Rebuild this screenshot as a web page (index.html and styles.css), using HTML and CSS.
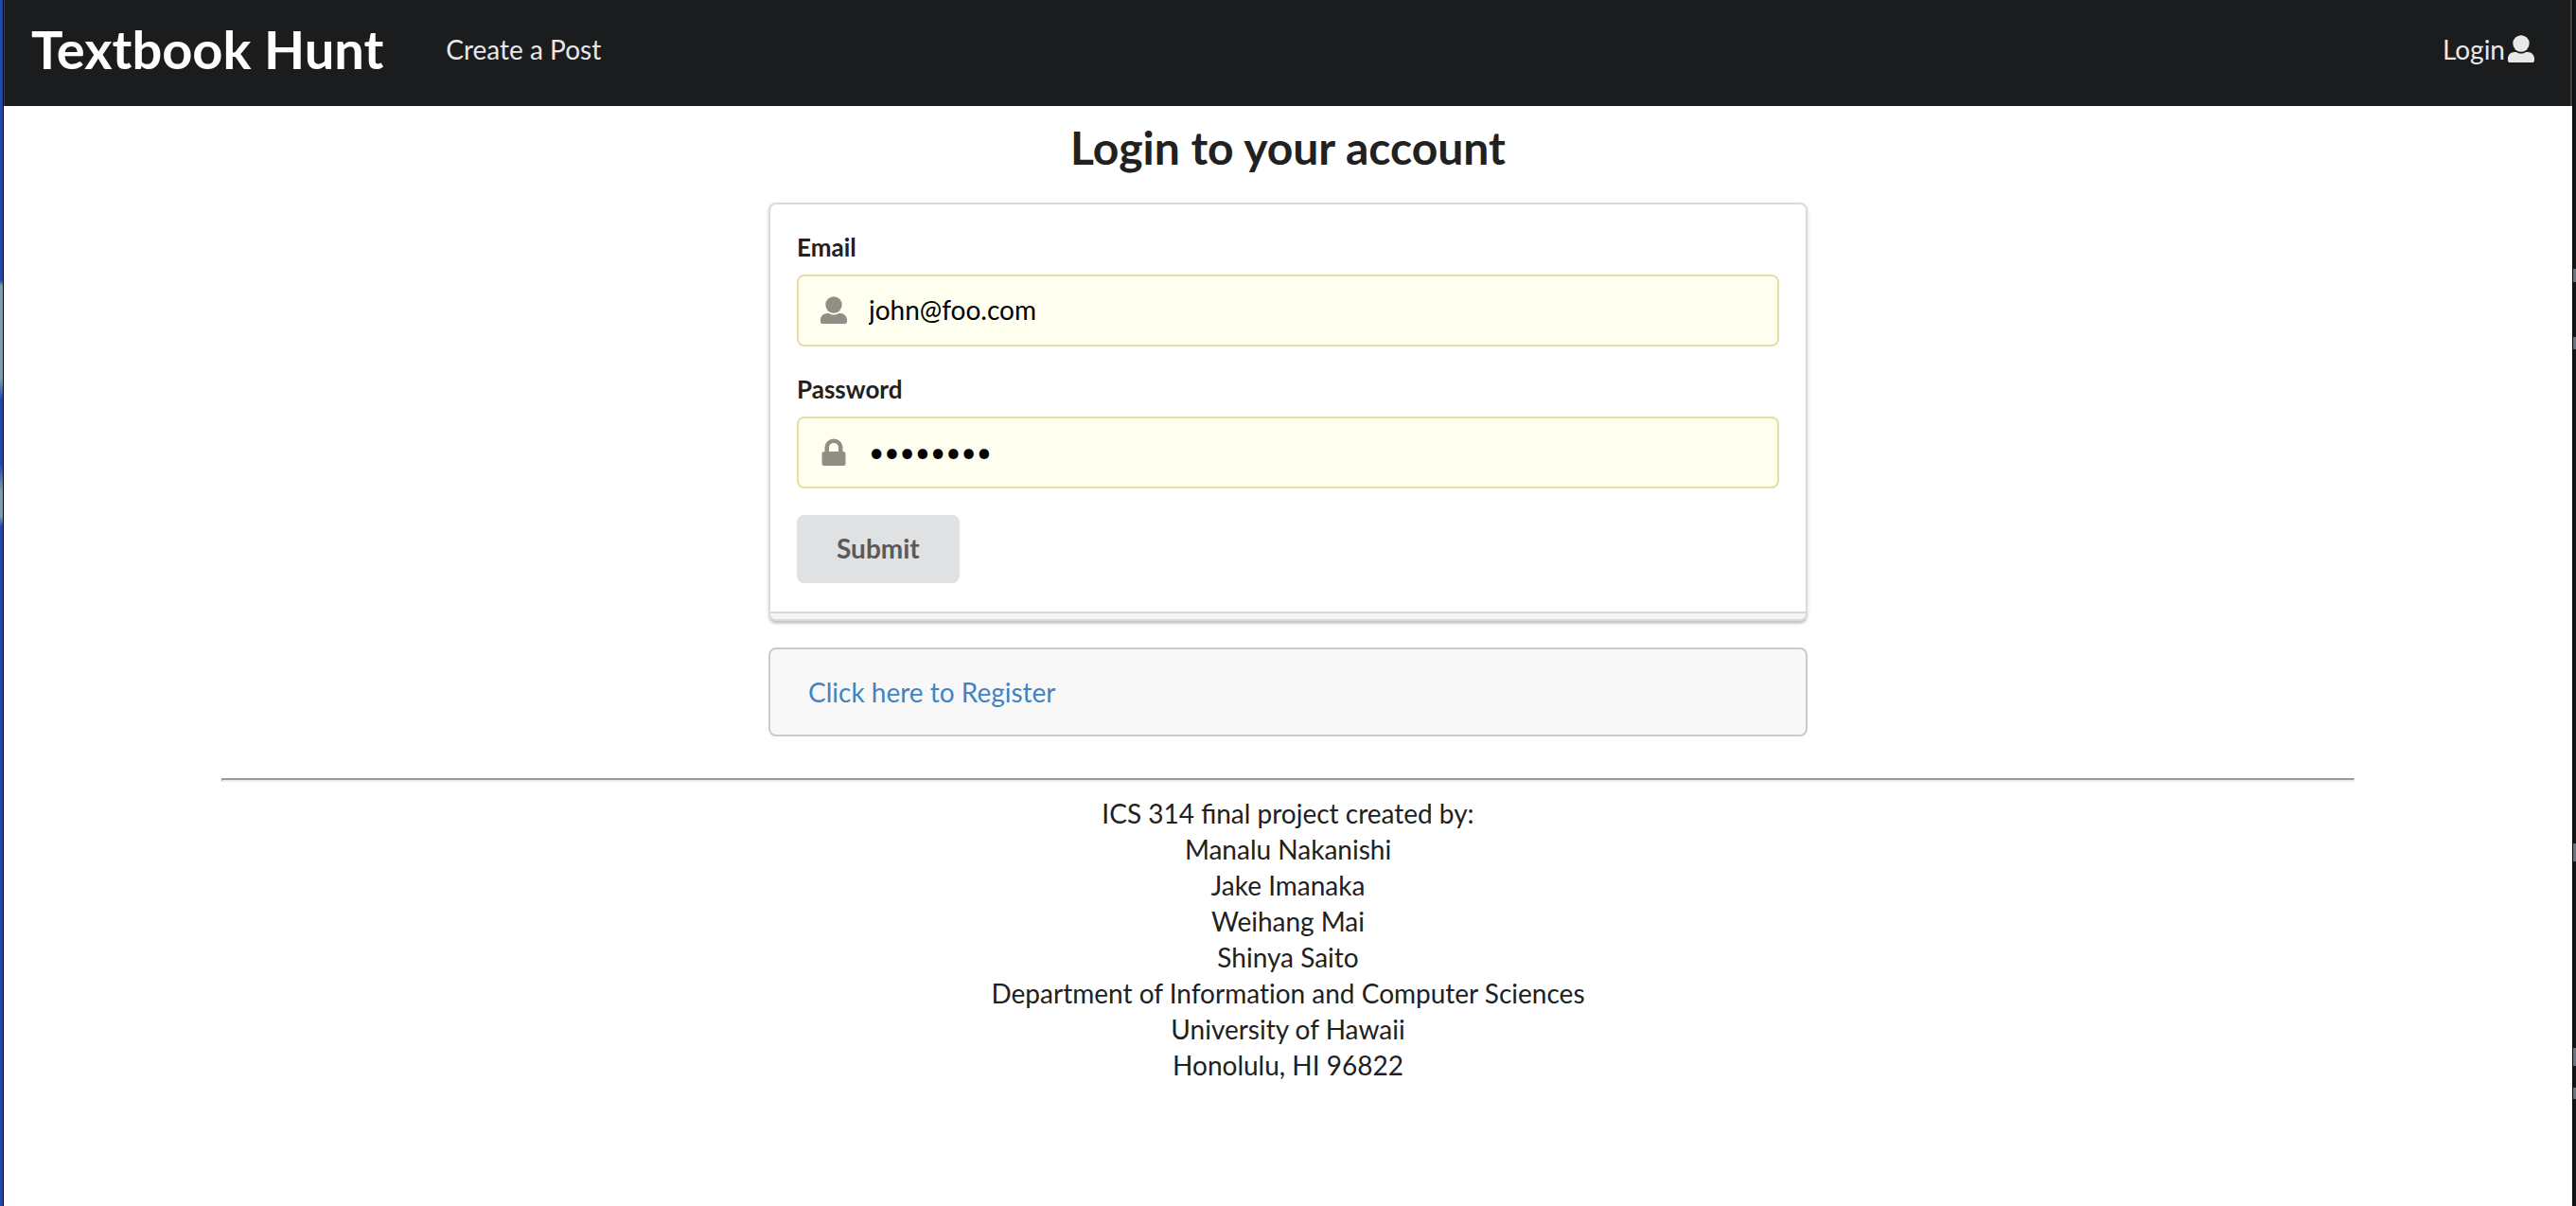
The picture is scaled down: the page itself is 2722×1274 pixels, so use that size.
FILE: index.html
```html
<!DOCTYPE html>
<html lang="en">
<head>
<meta charset="utf-8">
<title>Textbook Hunt</title>
<link rel="stylesheet" href="styles.css">
</head>
<body>
<div class="edge edge-left"></div>
<div class="window">
  <nav class="menu">
    <a class="brand" href="#">Textbook Hunt</a>
    <a class="item" href="#">Create a Post</a>
    <a class="item login" href="#">Login<svg class="icon" viewBox="0 0 28 30" aria-hidden="true"><circle cx="14" cy="9" r="8.700"/><path d="M7 18h2c3 2 7 2 10 0h2c4 0 7 3 7 7v1.500c0 2-1 2.500-2.500 2.500h-23C1 29 0 28.500 0 26.500V25c0-4 3-7 7-7z"/></svg></a>
  </nav>
  <main class="login-page">
    <h2 class="title">Login to your account</h2>
    <form class="card">
      <div class="field">
        <label for="email">Email</label>
        <div class="input">
          <svg class="icon" viewBox="0 0 28 30" aria-hidden="true"><circle cx="14" cy="9" r="8.700"/><path d="M7 18h2c3 2 7 2 10 0h2c4 0 7 3 7 7v1.500c0 2-1 2.500-2.500 2.500h-23C1 29 0 28.500 0 26.500V25c0-4 3-7 7-7z"/></svg>
          <input id="email" type="text" value="john@foo.com">
        </div>
      </div>
      <div class="field">
        <label for="password">Password</label>
        <div class="input">
          <svg class="icon" viewBox="0 0 28 30" aria-hidden="true"><path fill-rule="evenodd" d="M4.500 14v-4.500a9.500 9 0 0 1 19 0V14h.5q2.500 0 2.500 2.500v10q0 2.500-2.500 2.500H4q-2.500 0-2.500-2.500v-10Q1.500 14 4 14zM9 14h10V9.500a5 4.500 0 0 0-10 0z"/></svg>
          <input id="password" type="password" value="changeme">
        </div>
      </div>
      <button class="submit" type="button">Submit</button>
    </form>
    <div class="message"><a href="#">Click here to Register</a></div>
  </main>
  <footer class="footer">
    <hr>
    <div>ICS 314 final project created by:</div>
    <div>Manalu Nakanishi</div>
    <div>Jake Imanaka</div>
    <div>Weihang Mai</div>
    <div>Shinya Saito</div>
    <div class="department">Department of Information and Computer Sciences</div>
    <div>University of Hawaii</div>
    <div>Honolulu, HI 96822</div>
  </footer>
</div>
<div class="edge edge-right"></div>
</body>
</html>
```

FILE: styles.css
```css
* { box-sizing: border-box; }

body {
  margin: 0;
  min-height: 100vh;
  display: flex;
  background: #fff;
  color: #212121;
  font: 28px/38px Lato, "Liberation Sans", sans-serif;
}

a { text-decoration: none; }

/* Desktop showing on both sides of the window */
.edge { flex: none; width: 4px; }
.edge-left {
  border-right: 1px solid #000;
  background: linear-gradient(#2349a8 0, #2349a8 296px, #7f9fae 302px, #7f9fae 400px, #2349a8 422px, #2349a8 490px, #7f9fae 520px, #7f9fae 545px, #2349a8 556px);
}
.edge-right {
  border-left: 1px solid #000;
  background: linear-gradient(#141516 284px, #6c7480 284px 298px, #141516 298px 356px, #6c7480 356px 369px, #141516 369px 891px, #6c7480 891px 910px, #141516 910px 1107px, #6c7480 1107px 1126px, #141516 1126px 1149px, #6c7480 1149px 1161px, #141516 1161px);
}

.window { flex: 1; min-width: 0; }

.menu {
  display: flex;
  align-items: center;
  height: 112px;
  padding: 0 38px 8px 28px;
  background: #1b1c1d;
  border: solid #444;
  border-width: 0 2px 0 1px;
}
.brand { color: #fff; font-size: 56px; line-height: 72px; font-weight: 700; }
.item { margin-left: 66px; color: #e8e8e8; }
.login { display: flex; align-items: center; margin-left: auto; gap: 3px; }
.icon { flex: none; width: 28px; height: 30px; fill: currentColor; }

.login-page {
  width: 1098px;
  max-width: 100%;
  margin: 0 auto;
  padding-top: 14px;
}
.title {
  margin: 0 0 28px;
  font-size: 48px;
  line-height: 60px;
  font-weight: 700;
  text-align: center;
}

.card {
  position: relative;
  padding: 26px 28px 38px;
  background: #fff;
  border: 2px solid #dadada;
  border-radius: 8px;
  box-shadow: 0 2px 4px #22242626, 0 4px 2px -1px #22242626;
}
/* Second sheet under the form */
.card::after {
  content: "";
  position: absolute;
  left: 0;
  right: 0;
  bottom: 0;
  height: 6px;
  background: #f5f5f5;
  border-top: 2px solid #d8d8d8;
  border-radius: 0 0 6px 6px;
}

.field { margin-bottom: 26px; }
.field label {
  display: block;
  margin-bottom: 10px;
  font-size: 26px;
  font-weight: 700;
}
.input {
  display: flex;
  align-items: center;
  height: 76px;
  padding-left: 23px;
  gap: 23px;
  background: #fffff0;
  border: 2px solid #e5dfa1;
  border-radius: 8px;
  color: #8f8f86;
}
.input input {
  flex: 1;
  min-width: 0;
  padding: 0 0 2px;
  border: 0;
  outline: 0;
  background: none;
  color: #000;
  font: inherit;
}

.submit {
  display: block;
  height: 72px;
  margin-top: 28px;
  padding: 0 42px 2px;
  border: 0;
  border-radius: 8px;
  background: #e0e1e2;
  color: #5a5a5a;
  font: inherit;
  font-weight: 700;
}

.message {
  margin-top: 28px;
  padding: 26px 40px;
  background: #f8f8f9;
  border: 2px solid #c9caca;
  border-radius: 8px;
}
.message a { color: #4183c4; }

.footer {
  margin: 44px 230px 0;
  text-align: center;
}
.footer hr {
  height: 4px;
  margin: 0 0 14px;
  border: solid;
  border-width: 2px 1px;
  border-color: #9a9a9a #eee #eee #9a9a9a;
}
.department { font-variant-ligatures: none; }
```
